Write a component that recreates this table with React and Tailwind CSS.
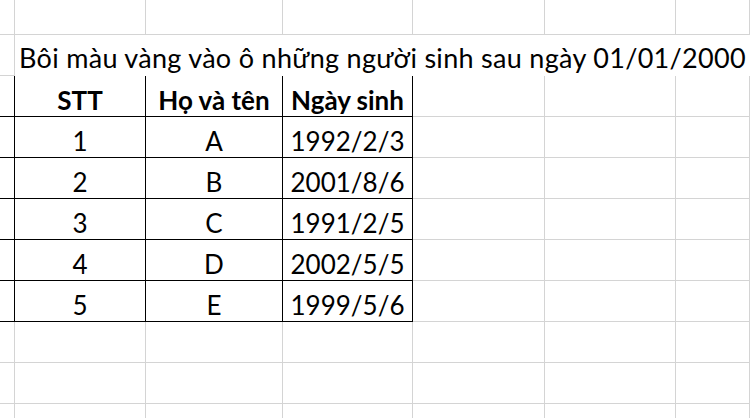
import React from "react";

const colWidths = ["w-[15px]", "w-[131px]", "w-[137px]", "w-[130px]", "w-[132px]", "w-[131px]", "flex-1"];

const rows = [
  null,
  "title",
  ["STT", "Họ và tên", "Ngày sinh"],
  ["1", "A", "1992/2/3"],
  ["2", "B", "2001/8/6"],
  ["3", "C", "1991/2/5"],
  ["4", "D", "2002/5/5"],
  ["5", "E", "1999/5/6"],
  null,
  null,
  null,
];

function Cell({ r, c, children }) {
  const inTable = r >= 2 && r <= 7;
  const bottomBlack = r >= 1 && r <= 7 && c >= 1 && c <= 3;
  const rightBlack = inTable && c >= 0 && c <= 3;
  const hideRight = r === 1 && c >= 1;
  const borderB = bottomBlack ? "border-b border-black" : "border-b border-[#d4d4d4]";
  const borderR = hideRight ? "border-r border-transparent" : rightBlack ? "border-r border-black" : "border-r border-[#d4d4d4]";
  return (
    <div className={`${colWidths[c]} shrink-0 h-full ${borderB} ${borderR} flex items-end justify-center pb-[3px]`}>
      {children}
    </div>
  );
}

export default function App() {
  return (
    <div className="w-[750px] h-[418px] bg-white overflow-hidden text-black font-['Lato','Carlito',sans-serif] text-[26px] leading-none">
      {rows.map((row, r) => (
        <div key={r} className={`flex ${r === 0 ? "h-[35px]" : "h-[41px]"} relative`}>
          {colWidths.map((_, c) => (
            <Cell key={c} r={r} c={c}>
              {Array.isArray(row) && c >= 1 && c <= 3 ? (
                <span className={r === 2 ? "font-bold" : ""}>{row[c - 1]}</span>
              ) : null}
            </Cell>
          ))}
          {row === "title" && (
            <span className="absolute left-[19px] bottom-[5px] whitespace-nowrap text-[27px] tracking-[0.3px]">
              Bôi màu vàng vào ô những người sinh sau ngày 01/01/2000
            </span>
          )}
        </div>
      ))}
    </div>
  );
}
